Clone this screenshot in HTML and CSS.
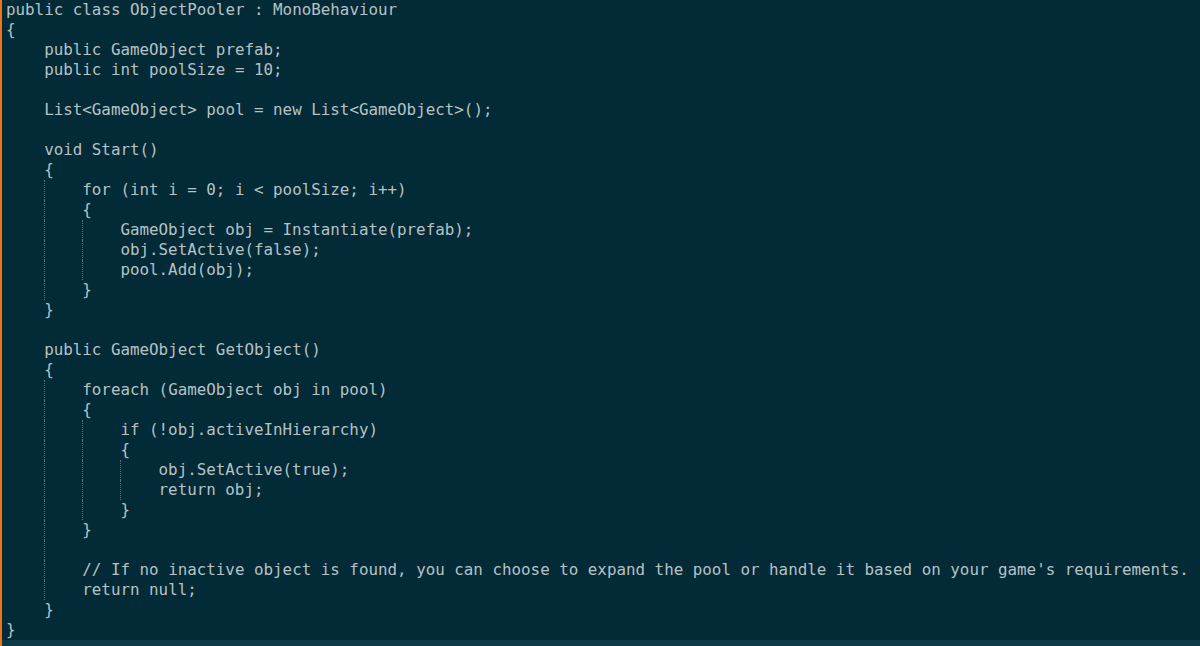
FILE: index.html
```html
<!DOCTYPE html>
<html>
<head>
<meta charset="utf-8">
<link rel="stylesheet" href="styles.css">
</head>
<body>
<div class="screen">
  <div class="editor">
    <div class="ln">public class ObjectPooler : MonoBehaviour</div>
    <div class="ln">{</div>
    <div class="ln"><span class="i"></span>public GameObject prefab;</div>
    <div class="ln"><span class="i"></span>public int poolSize = 10;</div>
    <div class="ln"></div>
    <div class="ln"><span class="i"></span>List&lt;GameObject&gt; pool = new List&lt;GameObject&gt;();</div>
    <div class="ln"></div>
    <div class="ln"><span class="i"></span>void Start()</div>
    <div class="ln"><span class="i"></span>{</div>
    <div class="ln"><span class="i"></span><span class="g"></span>for (int i = 0; i &lt; poolSize; i++)</div>
    <div class="ln"><span class="i"></span><span class="g"></span>{</div>
    <div class="ln"><span class="i"></span><span class="g"></span><span class="g"></span>GameObject obj = Instantiate(prefab);</div>
    <div class="ln"><span class="i"></span><span class="g"></span><span class="g"></span>obj.SetActive(false);</div>
    <div class="ln"><span class="i"></span><span class="g"></span><span class="g"></span>pool.Add(obj);</div>
    <div class="ln"><span class="i"></span><span class="g"></span>}</div>
    <div class="ln"><span class="i"></span>}</div>
    <div class="ln"></div>
    <div class="ln"><span class="i"></span>public GameObject GetObject()</div>
    <div class="ln"><span class="i"></span>{</div>
    <div class="ln"><span class="i"></span><span class="g"></span>foreach (GameObject obj in pool)</div>
    <div class="ln"><span class="i"></span><span class="g"></span>{</div>
    <div class="ln"><span class="i"></span><span class="g"></span><span class="g"></span>if (!obj.activeInHierarchy)</div>
    <div class="ln"><span class="i"></span><span class="g"></span><span class="g"></span>{</div>
    <div class="ln"><span class="i"></span><span class="g"></span><span class="g"></span><span class="g"></span>obj.SetActive(true);</div>
    <div class="ln"><span class="i"></span><span class="g"></span><span class="g"></span><span class="g"></span>return obj;</div>
    <div class="ln"><span class="i"></span><span class="g"></span><span class="g"></span>}</div>
    <div class="ln"><span class="i"></span><span class="g"></span>}</div>
    <div class="ln"><span class="i"></span><span class="g"></span></div>
    <div class="ln"><span class="i"></span><span class="g"></span>// If no inactive object is found, you can choose to expand the pool or handle it based on your game's requirements.</div>
    <div class="ln"><span class="i"></span><span class="g"></span>return null;</div>
    <div class="ln"><span class="i"></span>}</div>
    <div class="ln">}</div>
  </div>
  <div class="strip"></div>
</div>
</body>
</html>
```
FILE: styles.css
```css
html, body {
  margin: 0;
  padding: 0;
  background: #022a37;
}
.screen {
  width: 1200px;
  height: 646px;
  display: flex;
  flex-direction: column;
  border-left: 2px solid #f07318;
  box-sizing: border-box;
  overflow: hidden;
}
.editor {
  flex: 0 0 640px;
  padding-left: 4px;
  font-family: "DejaVu Sans Mono", "Liberation Mono", monospace;
  font-size: 15.85px;
  color: #b7c2c5;
}
.ln {
  height: 20px;
  line-height: 20px;
  display: flex;
  white-space: pre;
}
.i, .g {
  flex: 0 0 4ch;
  width: 4ch;
  height: 20px;
  box-sizing: border-box;
}
.g {
  border-left: 1px dotted #5d7177;
}
.strip {
  flex: 1;
  background: #0b3a46;
}
```
